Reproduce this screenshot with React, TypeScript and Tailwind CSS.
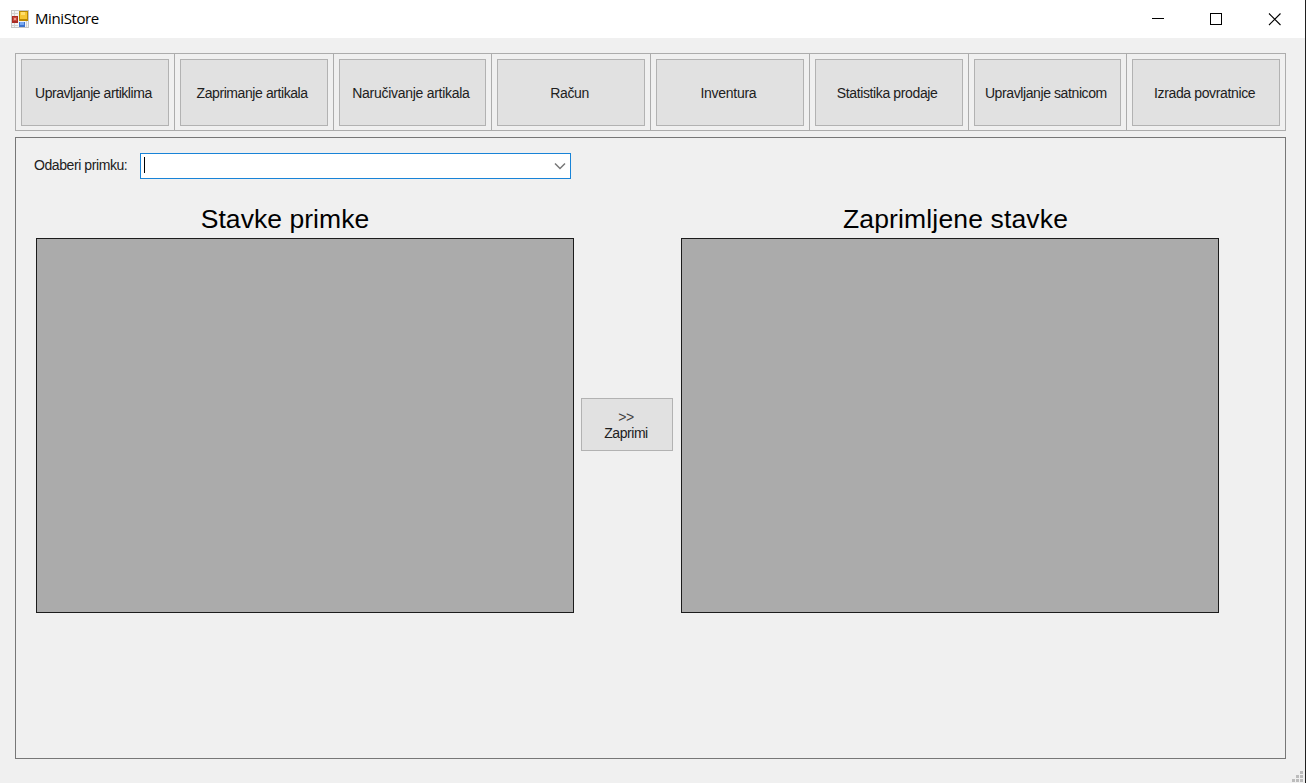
const menu = [
  { label: 'Upravljanje artiklima', tracking: 'tracking-[-0.44px]' },
  { label: 'Zaprimanje artikala', tracking: 'tracking-[-0.42px]' },
  { label: 'Naručivanje artikala', tracking: 'tracking-[-0.28px]' },
  { label: 'Račun', tracking: 'tracking-[-0.3px]' },
  { label: 'Inventura', tracking: 'tracking-[-0.28px]' },
  { label: 'Statistika prodaje', tracking: 'tracking-[-0.37px]' },
  { label: 'Upravljanje satnicom', tracking: 'tracking-[-0.4px]' },
  { label: 'Izrada povratnice', tracking: 'tracking-[-0.36px]' },
];

function AppIcon() {
  return (
    <svg width="18" height="18" viewBox="0 0 18 18" shapeRendering="crispEdges">
      <rect x="0.5" y="0.5" width="17" height="17" fill="#f4f4f4" stroke="#c6c6c6" />
      <path d="M3.5 1v5M1 3.5h6M3.5 13v4M1 15.5h6M15.5 11v6" stroke="#d2d2d2" />
      <rect x="1" y="6" width="6" height="7" fill="#a92b24" />
      <rect x="2" y="7" width="4" height="4" fill="#c84b40" />
      <rect x="3" y="8" width="2" height="2" fill="#ef9c8d" />
      <rect x="8" y="1" width="9" height="10" fill="#b98900" />
      <rect x="9" y="2" width="7" height="7" fill="#f5c632" />
      <rect x="10" y="2" width="4" height="3" fill="#ffdf6c" />
      <rect x="8" y="12" width="6" height="5" fill="#3d73cc" />
      <rect x="9" y="12" width="4" height="3" fill="#79a9f1" />
    </svg>
  );
}

function TitleBar() {
  return (
    <header className="flex h-[38px] items-center bg-white pl-[11px]">
      <AppIcon />
      <span className="ml-[6px] grow pb-[2px] font-['Open_Sans','Noto_Sans',sans-serif] text-[15px] leading-[18px] tracking-[-0.4px] text-black">
        MiniStore
      </span>
      <svg width="154" height="38" viewBox="0 0 154 38" fill="none" stroke="#000">
        <path d="M1 18.5h12" shapeRendering="crispEdges" />
        <rect x="59.5" y="13.5" width="11" height="11" shapeRendering="crispEdges" />
        <path d="M118 13.5l11.5 11.5M129.5 13.5l-11.5 11.5" strokeWidth="1.1" />
      </svg>
    </header>
  );
}

function ItemsGrid({ title, spacing }: { title: string; spacing: string }) {
  return (
    <section className="w-[538px]">
      <h2 className={`flex h-[38px] items-center justify-center whitespace-nowrap text-[26.5px] leading-[38px] text-black ${spacing}`}>
        {title}
      </h2>
      <div className="h-[375px] border border-[#1c1c1c] bg-[#ababab]" />
    </section>
  );
}

function ResizeGrip() {
  return (
    <svg className="absolute right-[1px] bottom-0 h-3 w-3" viewBox="0 0 12 12" fill="#bcbcbc" shapeRendering="crispEdges">
      <path d="M8 0h3v3h-3zM4 4h3v3h-3zM8 4h3v3h-3zM0 8h3v3h-3zM4 8h3v3h-3zM8 8h3v3h-3z" />
    </svg>
  );
}

export default function App() {
  return (
    <div className="relative flex h-[783px] w-[1306px] flex-col overflow-hidden border-r border-[#202020] bg-[#f0f0f0] font-['Liberation_Sans',Arial,sans-serif] text-[14px] text-[#202020]">
      <TitleBar />
      <nav className="mt-[15px] ml-[15px] grid h-[78px] w-[1271px] shrink-0 grid-cols-8 border-y border-r border-[#acacac]">
        {menu.map((item) => (
          <div key={item.label} className="border-l border-[#acacac] p-[5px]">
            <button
              type="button"
              className={`flex h-[67px] w-full items-center justify-center border border-[#b2b2b2] bg-[#e1e1e1] pt-px pr-[3px] whitespace-nowrap ${item.tracking}`}
            >
              {item.label}
            </button>
          </div>
        ))}
      </nav>
      <main className="mt-[6px] ml-[15px] h-[622px] w-[1271px] shrink-0 border border-[#777777] pt-[15px] pl-5">
        <div className="flex h-[26px] items-center">
          <label htmlFor="primka" className="-ml-[2px] w-[106px] pb-px whitespace-nowrap tracking-[-0.42px]">
            Odaberi primku:
          </label>
          <div id="primka" role="combobox" className="flex h-[26px] w-[431px] items-center justify-between border border-[#1883d7] bg-white pr-[4px] pl-[3px]">
            <span className="-mt-[2px] h-4 w-px bg-black" />
            <svg width="12" height="8" viewBox="0 0 12 8" fill="none" stroke="#777" strokeWidth="1.5">
              <path d="M1 1.5l5 5 5-5" />
            </svg>
          </div>
        </div>
        <div className="mt-[21px] flex">
          <ItemsGrid title="Stavke primke" spacing="pr-[40px] tracking-[0.05px]" />
          <button
            type="button"
            className="mt-[198px] mr-[8px] ml-[7px] h-[53px] w-[92px] border border-[#b2b2b2] bg-[#e1e1e1] pr-[2px] leading-4 tracking-[-0.45px]"
          >
            <span className="block text-[#444]">&gt;&gt;</span>
            <span className="block">Zaprimi</span>
          </button>
          <ItemsGrid title="Zaprimljene stavke" spacing="pl-[11px] tracking-[0.15px]" />
        </div>
      </main>
      <ResizeGrip />
    </div>
  );
}
